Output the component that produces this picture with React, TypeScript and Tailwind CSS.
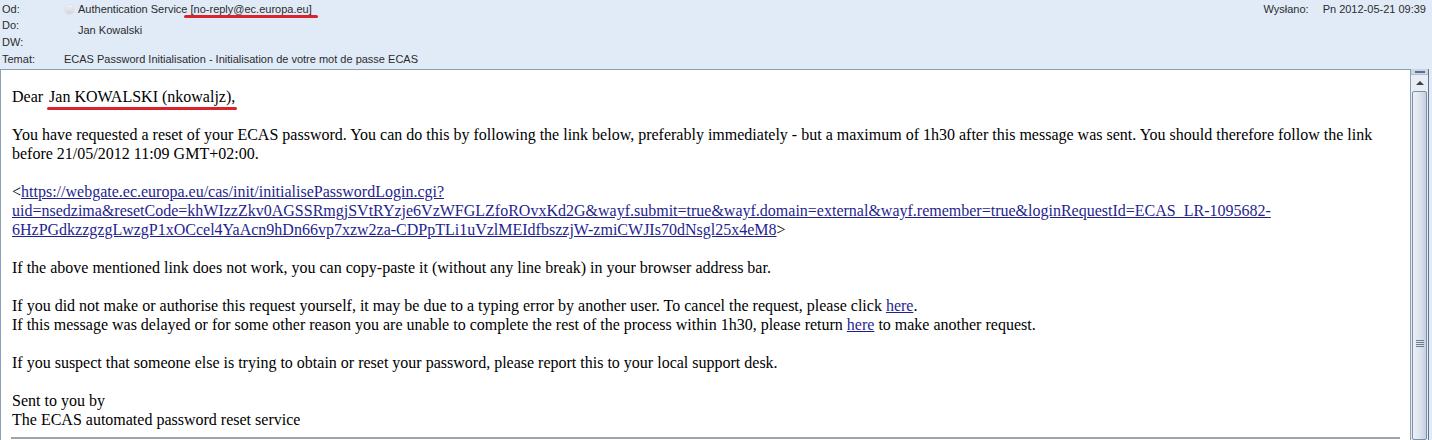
import React from "react";

const Underline = ({ className }: { className: string }) => (
  <span className={"absolute h-[3px] rounded-full bg-[#d9232d] " + className} />
);

export default function App() {
  const hdr = "font-['Liberation_Sans',Arial,sans-serif] text-[11px] text-[#2b2b2b]";
  const serif = "font-['Liberation_Serif','Times_New_Roman',serif] text-[16px] leading-[19px] text-black";
  const link = "text-[#1f1f8f] underline";
  return (
    <div className="w-[1432px] h-[440px] overflow-hidden bg-[#e1ebf8] flex flex-col">
      <div className={"h-[69px] shrink-0 relative " + hdr}>
        <div className="flex h-[17px] items-center pt-[2px]">
          <div className="w-[64px] pl-[2px]">Od:</div>
          <span className="w-[11px] h-[11px] rounded-full bg-gradient-to-b from-[#f0f2f4] to-[#cfd5dc] border border-[#dfe3e8] mr-[3px]" />
          <span className="relative">
            Authentication Service [no-reply@ec.europa.eu]
            <Underline className="left-[106px] top-[14px] w-[134px]" />
          </span>
          <div className="ml-auto flex pr-[6px]">
            <span className="mr-[14px]">Wysłano:</span>
            <span>Pn 2012-05-21 09:39</span>
          </div>
        </div>
        <div className="flex h-[17px] items-center">
          <div className="w-[78px] pl-[2px] self-start">Do:</div>
          <span className="pt-[10px]">Jan Kowalski</span>
        </div>
        <div className="flex h-[17px] items-center">
          <div className="w-[64px] pl-[2px]">DW:</div>
        </div>
        <div className="flex h-[17px] items-center">
          <div className="w-[64px] pl-[2px]">Temat:</div>
          <span>ECAS Password Initialisation - Initialisation de votre mot de passe ECAS</span>
        </div>
      </div>
      <div className="flex flex-1 min-h-0">
        <div className="flex-1 bg-white border-l border-t border-[#8b9fb5] pl-[11px] pt-[17px] pr-[20px] relative">
          <div className={serif}>
            <p className="relative">
              Dear <span className="ml-[2px]">Jan KOWALSKI (nkowaljz),</span>
              <Underline className="left-[35px] top-[20px] w-[190px]" />
            </p>
            <p className="mt-[19px]">
              You have requested a reset of your ECAS password. You can do this by following the link below, preferably immediately - but a maximum of 1h30 after this message was sent. You should therefore follow the link before 21/05/2012 11:09 GMT+02:00.
            </p>
            <p className="mt-[19px]">
              &lt;<span className={link}>https://webgate.ec.europa.eu/cas/init/initialisePasswordLogin.cgi?</span>
              <br />
              <span className={link}>uid=nsedzima&amp;resetCode=khWIzzZkv0AGSSRmgjSVtRYzje6VzWFGLZfoROvxKd2G&amp;wayf.submit=true&amp;wayf.domain=external&amp;wayf.remember=true&amp;loginRequestId=ECAS_LR-1095682-</span>
              <br />
              <span className={link}>6HzPGdkzzgzgLwzgP1xOCcel4YaAcn9hDn66vp7xzw2za-CDPpTLi1uVzlMEIdfbszzjW-zmiCWJIs70dNsgl25x4eM8</span>&gt;
            </p>
            <p className="mt-[19px]">
              If the above mentioned link does not work, you can copy-paste it (without any line break) in your browser address bar.
            </p>
            <p className="mt-[19px]">
              If you did not make or authorise this request yourself, it may be due to a typing error by another user. To cancel the request, please click <span className={link}>here</span>.
              <br />
              If this message was delayed or for some other reason you are unable to complete the rest of the process within 1h30, please return <span className={link}>here</span> to make another request.
            </p>
            <p className="mt-[19px]">
              If you suspect that someone else is trying to obtain or reset your password, please report this to your local support desk.
            </p>
            <p className="mt-[19px]">
              Sent to you by
              <br />
              The ECAS automated password reset service
            </p>
          </div>
          <div className="mt-[8px] ml-[-1px] mr-[-10px] h-[2px] bg-[#9ea4aa]" />
        </div>
        <div className="w-[18px] shrink-0 flex flex-col bg-[#e9eef5] border-l border-[#8b9fb5]">
          <div className="h-[6px] bg-[#c9d6e6] flex items-center justify-center border-b border-[#aebdd0]">
            <div className="w-[10px] h-[2px] bg-[#5a6f8c]" />
          </div>
          <div className="h-[16px] flex items-center justify-center">
            <div className="w-0 h-0 border-l-[4px] border-r-[4px] border-b-[4px] border-l-transparent border-r-transparent border-b-[#3a3f48]" />
          </div>
          <div className="flex-1 mx-[1px] border border-[#7c8ea6] rounded-[2px] bg-gradient-to-r from-[#eef2f7] via-[#dde4ee] to-[#c6d0de] flex flex-col items-center pt-[248px]">
            <div className="w-[8px] h-[1px] bg-[#6f7b8c] mb-[1px]" />
            <div className="w-[8px] h-[1px] bg-[#6f7b8c] mb-[1px]" />
            <div className="w-[8px] h-[1px] bg-[#6f7b8c] mb-[1px]" />
            <div className="w-[8px] h-[1px] bg-[#6f7b8c]" />
          </div>
        </div>
        <div className="w-[4px] shrink-0 bg-[#e1ebf8] border-l border-[#5e7593]" />
      </div>
    </div>
  );
}
